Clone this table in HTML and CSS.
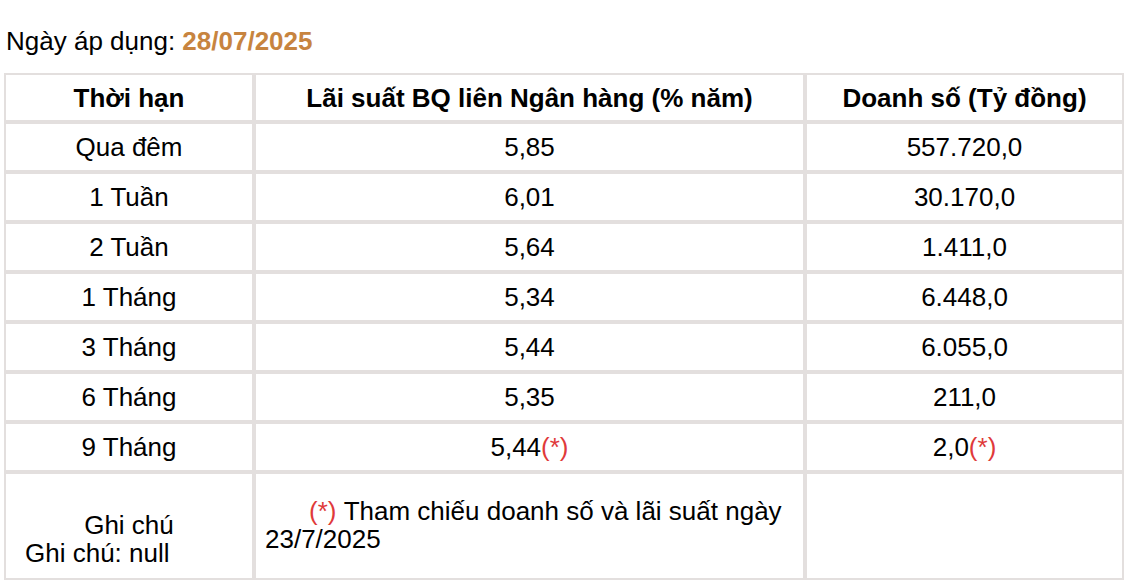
FILE: index.html
```html
<!DOCTYPE html>
<html lang="vi">
<head>
<meta charset="utf-8">
<title>Lãi suất BQ liên Ngân hàng</title>
<link rel="stylesheet" href="styles.css">
</head>
<body>
<div class="page">
  <p class="title">Ngày áp dụng: <b class="date">28/07/2025</b></p>
  <table class="rates">
    <thead>
      <tr>
        <th class="c1">Thời hạn</th>
        <th class="c2">Lãi suất BQ liên Ngân hàng (% năm)</th>
        <th class="c3">Doanh số (Tỷ đồng)</th>
      </tr>
    </thead>
    <tbody>
      <tr><td>Qua đêm</td><td>5,85</td><td>557.720,0</td></tr>
      <tr><td>1 Tuần</td><td>6,01</td><td>30.170,0</td></tr>
      <tr><td>2 Tuần</td><td>5,64</td><td>1.411,0</td></tr>
      <tr><td>1 Tháng</td><td>5,34</td><td>6.448,0</td></tr>
      <tr><td>3 Tháng</td><td>5,44</td><td>6.055,0</td></tr>
      <tr><td>6 Tháng</td><td>5,35</td><td>211,0</td></tr>
      <tr><td>9 Tháng</td><td>5,44<span class="star">(*)</span></td><td>2,0<span class="star">(*)</span></td></tr>
      <tr class="notes">
        <td class="note-label"><div class="note-head">Ghi chú</div><div class="note-null">Ghi chú: null</div></td>
        <td class="note-text"><span class="star lead">(*)</span>&nbsp;Tham chiếu doanh số và lãi suất ngày 23/7/2025</td>
        <td></td>
      </tr>
    </tbody>
  </table>
</div>
</body>
</html>
```
FILE: styles.css
```css
html, body {
  margin: 0;
  padding: 0;
  background: #ffffff;
}

body {
  font-family: "Liberation Sans", Arial, Helvetica, sans-serif;
  font-size: 26px;
  line-height: 28px;
  color: #000000;
}

.page {
  padding: 27px 4px 0 4px;
}

.title {
  margin: 0 0 18px 2px;
  line-height: 28px;
}

.date {
  color: #c7843f;
  font-weight: bold;
}

.rates {
  width: 1120px;
  table-layout: fixed;
  border-collapse: separate;
  border-spacing: 0;
}

.rates th,
.rates td {
  box-sizing: border-box;
  border: 2px solid #e3dfde;
  text-align: center;
  vertical-align: middle;
  height: 50px;
  padding: 0 8px;
  font-weight: normal;
}

.rates th {
  font-weight: bold;
  height: 49px;
}

.c1 { width: 250px; }
.c2 { width: 551px; }
.c3 { width: 319px; }

.star {
  color: #e03a3a;
}

.notes td {
  height: 108px;
}

.notes .note-label {
  padding: 26px 0 0 0;
}

.note-null {
  text-align: left;
  padding-left: 19px;
}

.notes .note-text {
  text-align: left;
  padding: 0 8px 2px 9px;
}

.lead {
  margin-left: 44px;
}
```
